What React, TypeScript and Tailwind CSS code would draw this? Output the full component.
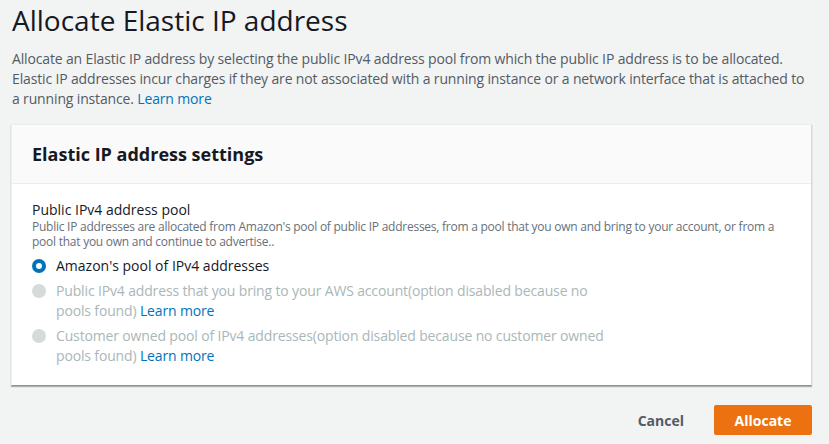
import React from "react";

const font = { fontFamily: '"Open Sans", "Noto Sans", Arial, sans-serif' };

function Radio({ checked, disabled }: { checked?: boolean; disabled?: boolean }) {
  if (checked)
    return (
      <span className="mt-[3px] flex h-[14px] w-[14px] shrink-0 items-center justify-center rounded-full bg-[#0073bb]">
        <span className="h-[6px] w-[6px] rounded-full bg-white" />
      </span>
    );
  return <span className={"mt-[3px] block h-[14px] w-[14px] shrink-0 rounded-full " + (disabled ? "bg-[#d5dbdb]" : "bg-white border border-[#aab7b8]")} />;
}

export default function App() {
  return (
    <div className="min-h-[444px] w-full bg-[#f2f3f3] text-[#16191f]" style={font}>
      <div className="px-[12px] pt-[2px]">
        <h1 className="text-[28px] leading-[36px] font-normal text-[#16191f]">Allocate Elastic IP address</h1>
        <p className="mt-[11px] max-w-[795px] text-[14px] leading-[20px] text-[#545b64] tracking-[-0.15px]">
          Allocate an Elastic IP address by selecting the public IPv4 address pool from which the public IP address is to be allocated. Elastic IP addresses incur charges if they are not associated with a running instance or a network interface that is attached to a running instance.{" "}
          <span className="text-[#0073bb]">Learn more</span>
        </p>
        <div className="mt-[15px] ml-[-1px] mr-[5px] border border-[#eaeded] border-b-[#879596] border-r-[#d5dbdb] bg-white shadow-[0_1px_1px_0_rgba(0,28,36,0.3)]">
          <div className="flex h-[59px] items-center border-b border-[#eaeded] bg-[#fafafa] px-[20px]">
            <h2 className="text-[18px] font-bold leading-[22px] text-[#16191f]">Elastic IP address settings</h2>
          </div>
          <div className="px-[20px] pt-[17px] pb-[19px]">
            <div className="text-[14px] leading-[18px] text-[#16191f]">Public IPv4 address pool</div>
            <div className="text-[12px] leading-[15px] text-[#687078] tracking-[-0.25px]">
              Public IP addresses are allocated from Amazon's pool of public IP addresses, from a pool that you own and bring to your account, or from a pool that you own and continue to advertise..
            </div>
            <div className="mt-[7px] flex flex-col gap-[5px]">
              <div className="flex gap-[10px]">
                <Radio checked />
                <span className="text-[14px] leading-[20px] text-[#16191f]">Amazon's pool of IPv4 addresses</span>
              </div>
              <div className="flex gap-[10px]">
                <Radio disabled />
                <span className="w-[550px] text-[14px] leading-[20px] text-[#aab7b8] tracking-[-0.15px]">
                  Public IPv4 address that you bring to your AWS account(option disabled because no pools found){" "}
                  <span className="text-[#0073bb]">Learn more</span>
                </span>
              </div>
              <div className="flex gap-[10px]">
                <Radio disabled />
                <span className="w-[550px] text-[14px] leading-[20px] text-[#aab7b8] tracking-[-0.15px]">
                  Customer owned pool of IPv4 addresses(option disabled because no customer owned pools found){" "}
                  <span className="text-[#0073bb]">Learn more</span>
                </span>
              </div>
            </div>
          </div>
        </div>
        <div className="mt-[19px] mr-[5px] flex items-center justify-end gap-[30px]">
          <button className="text-[14px] font-bold text-[#545b64]">Cancel</button>
          <button className="h-[30px] w-[98px] rounded-[2px] bg-[#ec7211] text-[14px] font-bold text-white">Allocate</button>
        </div>
      </div>
    </div>
  );
}
